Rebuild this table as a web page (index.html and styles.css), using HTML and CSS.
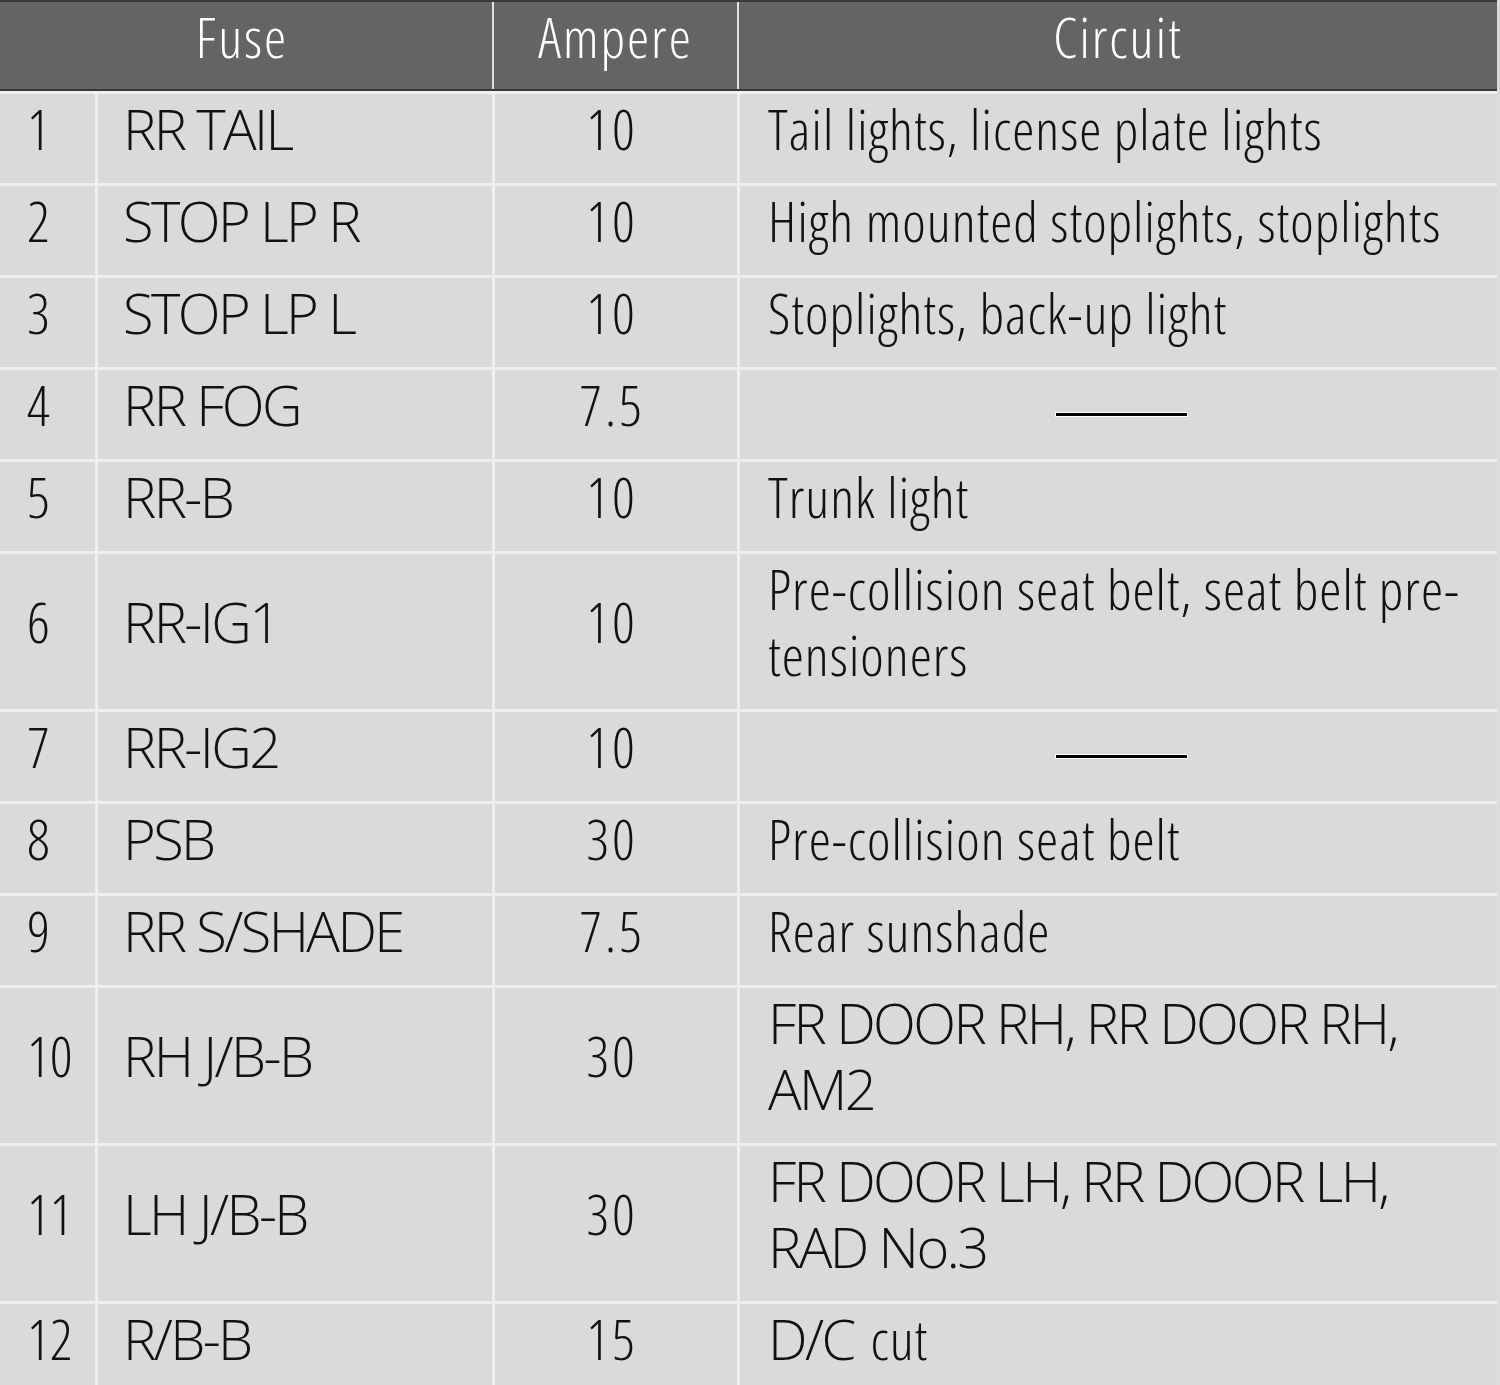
FILE: index.html
```html
<!DOCTYPE html>
<html lang="en">
<head>
<meta charset="utf-8">
<title>Fuse table</title>
<link rel="stylesheet" href="styles.css">
</head>
<body>
<div class="table">
  <div class="head">
    <div class="hcell">Fuse</div>
    <div class="hcell sep">Ampere</div>
    <div class="hcell sep">Circuit</div>
  </div>
  <div class="row single"><div class="cell num">1</div><div class="cell caps">RR TAIL</div><div class="cell amp">10</div><div class="cell">Tail lights, license plate lights</div></div>
  <div class="row single"><div class="cell num">2</div><div class="cell caps">STOP LP R</div><div class="cell amp">10</div><div class="cell">High mounted stoplights, stoplights</div></div>
  <div class="row single"><div class="cell num">3</div><div class="cell caps">STOP LP L</div><div class="cell amp">10</div><div class="cell">Stoplights, back-up light</div></div>
  <div class="row single"><div class="cell num">4</div><div class="cell caps">RR FOG</div><div class="cell amp">7.5</div><div class="cell blank"><span class="dash"></span></div></div>
  <div class="row single"><div class="cell num">5</div><div class="cell caps">RR-B</div><div class="cell amp">10</div><div class="cell">Trunk light</div></div>
  <div class="row double"><div class="cell num">6</div><div class="cell caps">RR-IG1</div><div class="cell amp">10</div><div class="cell">Pre-collision seat belt, seat belt pre-<br>tensioners</div></div>
  <div class="row single"><div class="cell num">7</div><div class="cell caps">RR-IG2</div><div class="cell amp">10</div><div class="cell blank"><span class="dash"></span></div></div>
  <div class="row single"><div class="cell num">8</div><div class="cell caps">PSB</div><div class="cell amp">30</div><div class="cell">Pre-collision seat belt</div></div>
  <div class="row single"><div class="cell num">9</div><div class="cell caps">RR S/SHADE</div><div class="cell amp">7.5</div><div class="cell">Rear sunshade</div></div>
  <div class="row double"><div class="cell num">10</div><div class="cell caps">RH J/B-B</div><div class="cell amp">30</div><div class="cell caps">FR DOOR RH, RR DOOR RH,<br>AM2</div></div>
  <div class="row double"><div class="cell num">11</div><div class="cell caps">LH J/B-B</div><div class="cell amp">30</div><div class="cell caps">FR DOOR LH, RR DOOR LH,<br>RAD No.3</div></div>
  <div class="row single"><div class="cell num">12</div><div class="cell caps">R/B-B</div><div class="cell amp">15</div><div class="cell"><span class="upper">D/C</span> cut</div></div>
</div>
</body>
</html>
```
FILE: styles.css
```css
html, body {
  margin: 0;
  padding: 0;
  overflow: hidden;
  background: #dcdcdc;
}
.table {
  width: 1497px;
  font-family: "Open Sans", "Liberation Sans", sans-serif;
  font-stretch: 75%;
  font-weight: 300;
  font-size: 56px;
  line-height: 66px;
  color: #111;
  background: #dadada;
}
.head {
  display: grid;
  grid-template-columns: 492px 245px 1fr;
  height: 91px;
  box-sizing: border-box;
  background: #646464;
  border-top: 2px solid #3a3a3a;
  border-bottom: 2px solid #3a3a3a;
}
.hcell {
  display: flex;
  align-items: center;
  justify-content: center;
  color: #fff;
  letter-spacing: 2px;
  padding-bottom: 20px;
  box-sizing: border-box;
}
.hcell:first-child {
  padding-right: 8px;
}
.hcell.sep {
  border-left: 2px solid #e2e2e2;
}
.row {
  display: grid;
  grid-template-columns: 95px 397px 245px 1fr;
  box-sizing: border-box;
  border-top: 3px solid #efefef;
}
.row.single { height: 92px; }
.row.double { height: 158px; }
.cell {
  display: flex;
  align-items: center;
  box-sizing: border-box;
  padding: 0 0 22px 28px;
  white-space: nowrap;
  letter-spacing: 1px;
  border-left: 3px solid #efefef;
}
.cell.caps {
  font-stretch: 100%;
  letter-spacing: -2.6px;
  padding-left: 25px;
}
.cell.caps:last-child {
  padding-left: 28px;
}
.upper {
  font-stretch: 100%;
  letter-spacing: -2.6px;
  margin-right: 0.3em;
}
.cell.num {
  border-left: none;
  padding-left: 27px;
  letter-spacing: 0;
}
.cell.amp {
  justify-content: center;
  padding-left: 0;
  padding-right: 8px;
  letter-spacing: 3px;
}
.cell.blank {
  justify-content: center;
  padding: 0 0 0 6px;
}
.dash {
  display: block;
  width: 131px;
  height: 3px;
  background: #000;
  box-shadow: 0 0 0 1px #fff;
}
```
